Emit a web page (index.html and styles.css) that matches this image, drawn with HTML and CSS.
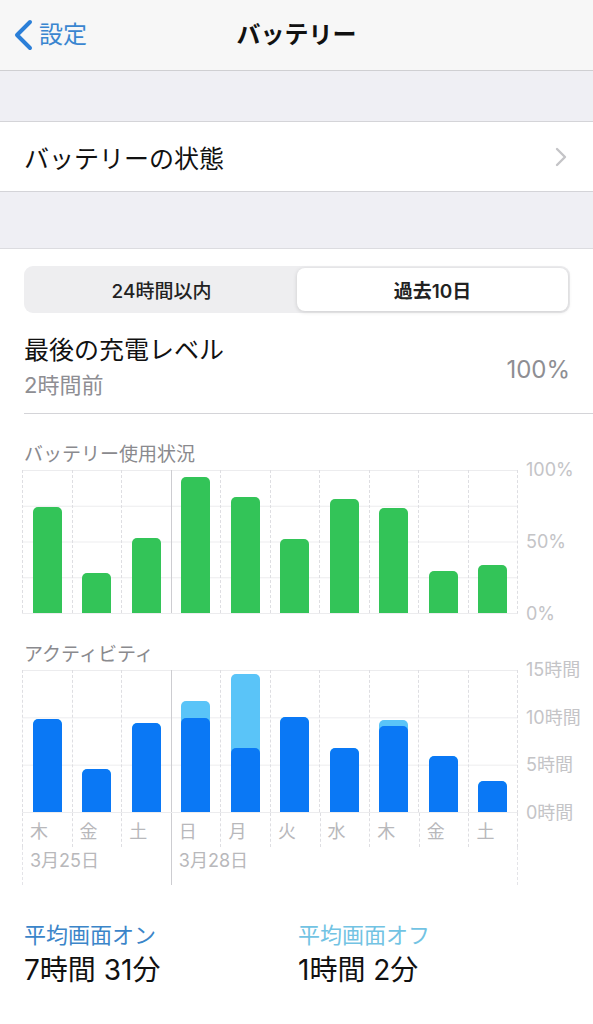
FILE: index.html
```html
<!DOCTYPE html>
<html lang="ja">
<head>
    <meta charset="UTF-8">
    <meta name="viewport" content="width=device-width, initial-scale=1.0">
    <title>バッテリー</title>
    <link rel="stylesheet" href="styles.css">
</head>
<body>
    <div class="nav">
        <a class="back" href="#">
            <svg width="20" height="32" viewBox="0 0 20 32"><path d="M17 3 L4 16 L17 29" fill="none" stroke="#2b7fd8" stroke-width="4" stroke-linecap="round" stroke-linejoin="round"/></svg>
            <span>設定</span>
        </a>
        <div class="title">バッテリー</div>
        <div></div>
    </div>

    <div class="gap gap-top"></div>

    <div class="row">
        <span>バッテリーの状態</span>
        <svg width="12" height="20" viewBox="0 0 12 20"><path d="M2 2 L10 10 L2 18" fill="none" stroke="#c4c4c7" stroke-width="2.4" stroke-linecap="round" stroke-linejoin="round"/></svg>
    </div>

    <div class="gap gap-mid"></div>

    <div class="panel">
        <div class="segment">
            <div class="seg-item">24時間以内</div>
            <div class="seg-item active">過去10日</div>
        </div>

        <div class="last-charge">
            <div>
                <div class="lc-title">最後の充電レベル</div>
                <div class="lc-sub">2時間前</div>
            </div>
            <div class="lc-value">100%</div>
        </div>

        <div class="chart-title">バッテリー使用状況</div>
        <div class="chart">
            <div class="plot plot-usage">
                <div class="col"><div class="bar green" style="height:74.4%"></div></div>
                <div class="col"><div class="bar green" style="height:27.7%"></div></div>
                <div class="col"><div class="bar green" style="height:52.7%"></div></div>
                <div class="col week"><div class="bar green" style="height:95.3%"></div></div>
                <div class="col"><div class="bar green" style="height:81.4%"></div></div>
                <div class="col"><div class="bar green" style="height:51.5%"></div></div>
                <div class="col"><div class="bar green" style="height:79.5%"></div></div>
                <div class="col"><div class="bar green" style="height:73.2%"></div></div>
                <div class="col"><div class="bar green" style="height:29.6%"></div></div>
                <div class="col"><div class="bar green" style="height:33.6%"></div></div>
            </div>
            <div class="axis">
                <span>100%</span>
                <span>50%</span>
                <span>0%</span>
            </div>
        </div>

        <div class="chart-title">アクティビティ</div>
        <div class="chart">
            <div class="plot plot-activity">
                <div class="col"><div class="bar light" style="height:65.4%"><div class="fill" style="height:100%"></div></div></div>
                <div class="col"><div class="bar light" style="height:30.6%"><div class="fill" style="height:100%"></div></div></div>
                <div class="col"><div class="bar light" style="height:62.4%"><div class="fill" style="height:100%"></div></div></div>
                <div class="col week"><div class="bar light" style="height:78.5%"><div class="fill" style="height:84.2%"></div></div></div>
                <div class="col"><div class="bar light" style="height:96.9%"><div class="fill" style="height:46.5%"></div></div></div>
                <div class="col"><div class="bar light" style="height:66.8%"><div class="fill" style="height:100%"></div></div></div>
                <div class="col"><div class="bar light" style="height:45.3%"><div class="fill" style="height:100%"></div></div></div>
                <div class="col"><div class="bar light" style="height:64.5%"><div class="fill" style="height:94.2%"></div></div></div>
                <div class="col"><div class="bar light" style="height:39.3%"><div class="fill" style="height:100%"></div></div></div>
                <div class="col"><div class="bar light" style="height:21.5%"><div class="fill" style="height:100%"></div></div></div>
            </div>
            <div class="axis">
                <span>15時間</span>
                <span>10時間</span>
                <span>5時間</span>
                <span>0時間</span>
            </div>
        </div>
        <div class="days">
            <div class="day">木</div>
            <div class="day">金</div>
            <div class="day">土</div>
            <div class="day week">日</div>
            <div class="day">月</div>
            <div class="day">火</div>
            <div class="day">水</div>
            <div class="day">木</div>
            <div class="day">金</div>
            <div class="day">土</div>
        </div>
        <div class="dates">
            <div class="date first">3月25日</div>
            <div class="date week">3月28日</div>
        </div>

        <div class="stats">
            <div class="stat">
                <div class="stat-label on">平均画面オン</div>
                <div class="stat-value">7時間 31分</div>
            </div>
            <div class="stat">
                <div class="stat-label off">平均画面オフ</div>
                <div class="stat-value">1時間 2分</div>
            </div>
        </div>
    </div>
</body>
</html>
```

FILE: styles.css
```css
body {
    margin: 0;
    font-family: Inter, "Noto Sans CJK JP", sans-serif;
    background-color: #ffffff;
    color: #111;
}
.nav {
    height: 70px;
    display: grid;
    grid-template-columns: 1fr auto 1fr;
    align-items: center;
    background: #f7f7f7;
    border-bottom: 1px solid #cfcfd2;
}
.back {
    display: flex;
    align-items: center;
    gap: 6px;
    padding-left: 13px;
    color: #3a86d0;
    text-decoration: none;
    font-size: 24px;
    line-height: 30px;
}
.title {
    font-size: 24px;
    font-weight: bold;
    line-height: 30px;
}
.gap {
    background: #efeff4;
}
.gap-top {
    height: 50px;
}
.gap-mid {
    height: 56px;
    border-bottom: 1px solid #dcdce0;
}
.row {
    height: 69px;
    display: flex;
    align-items: center;
    justify-content: space-between;
    padding: 0 26px 0 24px;
    background: #fff;
    border-top: 1px solid #d4d4d8;
    border-bottom: 1px solid #d4d4d8;
    font-size: 25px;
}
.panel {
    padding: 17px 0 0 24px;
}
.segment {
    margin-right: 23px;
    height: 47px;
    box-sizing: border-box;
    padding: 2px;
    display: grid;
    grid-template-columns: 1fr 1fr;
    background: #eeeef0;
    border-radius: 9px;
}
.seg-item {
    display: flex;
    align-items: center;
    justify-content: center;
    font-size: 19px;
    font-weight: 500;
    color: #222;
}
.seg-item.active {
    font-weight: 600;
    background: #fff;
    border-radius: 8px;
    box-shadow: 0 1px 4px rgba(0,0,0,0.15);
}
.last-charge {
    margin-top: 21px;
    padding: 0 23px 13px 0;
    display: flex;
    align-items: center;
    justify-content: space-between;
    border-bottom: 1px solid #d4d4d8;
}
.lc-title {
    font-size: 25px;
    line-height: 32px;
}
.lc-sub {
    margin-top: 4px;
    font-size: 22px;
    line-height: 30px;
    color: #8e8e93;
}
.lc-value {
    font-size: 24px;
    color: #8e8e93;
    padding-top: 4px;
}
.chart-title {
    margin-top: 29px;
    font-size: 19px;
    line-height: 24px;
    color: #8a8a8e;
}
.chart {
    margin: 3px 0 0 -2px;
    display: flex;
}
.plot {
    width: 495px;
    display: grid;
    grid-template-columns: repeat(10, 1fr);
    border-right: 1px dashed #dedee2;
    border-bottom: 1px solid #ececee;
    background-image: linear-gradient(#ececee 1px, transparent 1px);
}
.plot-usage {
    height: 143px;
    background-size: 100% 25%;
}
.plot-activity {
    height: 142px;
    background-size: 100% 33.333%;
}
.col {
    display: flex;
    align-items: flex-end;
    justify-content: center;
    border-left: 1px dashed #dedee2;
}
.col.week {
    border-left: 1px solid #cdcdd1;
}
.bar {
    width: 29px;
    border-radius: 5px 5px 0 0;
    display: flex;
    align-items: flex-end;
    overflow: hidden;
}
.green {
    background: #33c458;
}
.light {
    background: #5ac4f8;
}
.fill {
    width: 100%;
    background: #0a78f5;
    border-radius: 5px 5px 0 0;
}
.axis {
    margin: -10px 0 -10px 0;
    padding-left: 8px;
    display: flex;
    flex-direction: column;
    justify-content: space-between;
    font-size: 18px;
    line-height: 20px;
    color: #c4c4c7;
}
.days {
    margin-left: -2px;
    width: 496px;
    display: grid;
    grid-template-columns: repeat(10, 1fr);
}
.day {
    height: 34px;
    padding: 6px 0 0 7px;
    box-sizing: border-box;
    font-size: 18px;
    line-height: 26px;
    color: #b8b8bb;
    border-left: 1px dashed #dedee2;
}
.day.week {
    border-left: 1px solid #cdcdd1;
}
.days .day:last-child {
    border-right: 1px dashed #dedee2;
}
.dates {
    margin-left: -2px;
    width: 496px;
    display: grid;
    grid-template-columns: 3fr 7fr;
}
.date {
    height: 38px;
    padding: 0 0 0 7px;
    box-sizing: border-box;
    font-size: 18px;
    line-height: 28px;
    color: #b8b8bb;
    border-left: 1px dashed #e4e4e8;
}
.date.week {
    border-left: 1px solid #cdcdd1;
    border-right: 1px dashed #e4e4e8;
}
.stats {
    padding: 36px 0 30px 0;
    display: grid;
    grid-template-columns: 274px 1fr;
}
.stat-label {
    font-size: 22px;
    line-height: 28px;
}
.stat-label.on {
    color: #3b85c9;
}
.stat-label.off {
    color: #72c3e3;
}
.stat-value {
    margin-top: 1px;
    font-size: 28px;
    line-height: 40px;
    color: #111;
}
```
